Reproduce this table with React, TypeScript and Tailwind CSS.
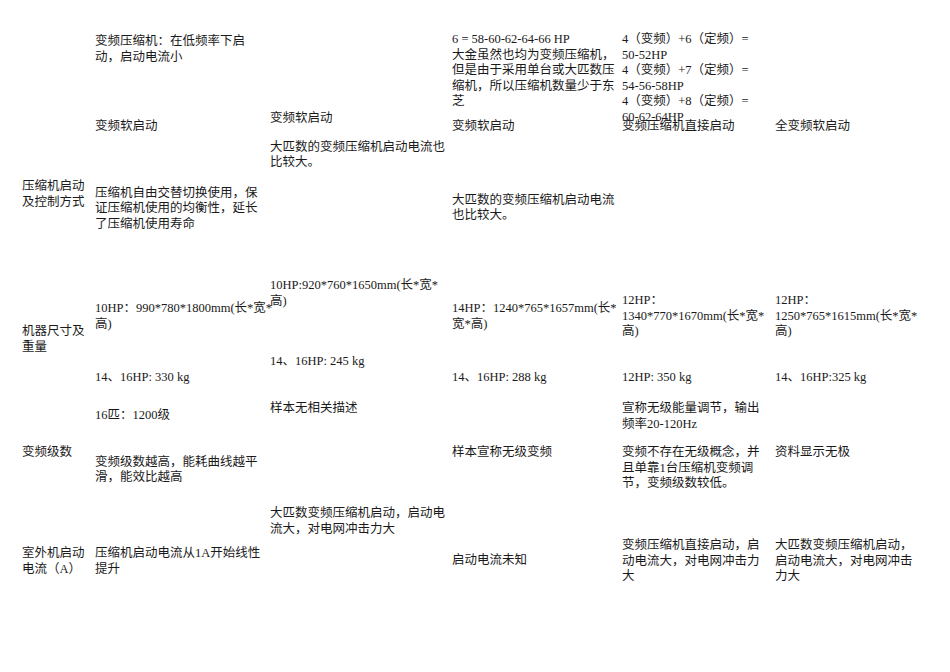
import type { ReactNode } from "react";

function Lines({ lines, className = "" }: { lines: string[]; className?: string }) {
  return (
    <div className={className}>
      {lines.map((line, i) => (
        <div key={i} className="whitespace-nowrap">
          {line}
        </div>
      ))}
    </div>
  );
}

function Cell({ children, className = "" }: { children?: ReactNode; className?: string }) {
  return <div className={`flex flex-col ${className}`}>{children}</div>;
}

export default function App() {
  return (
    <div className="h-[672px] w-[950px] overflow-hidden bg-white pt-[2px] font-['Liberation_Serif','Noto_Sans_CJK_SC',serif] text-[12.5px] leading-[15.6px] text-[#1a1a1a]">
      <div className="grid grid-cols-[95px_175px_182px_170px_153px_1fr] grid-rows-[108px_160px_124px_106px_102px]">
        {/* carried over from previous row */}
        <Cell />
        <Cell className="pt-[32px]">
          <Lines lines={["变频压缩机：在低频率下启", "动，启动电流小"]} />
        </Cell>
        <Cell />
        <Cell className="pt-[30px]">
          <Lines
            lines={[
              "6 = 58-60-62-64-66 HP",
              "大金虽然也均为变频压缩机，",
              "但是由于采用单台或大匹数压",
              "缩机，所以压缩机数量少于东",
              "芝",
            ]}
          />
        </Cell>
        <Cell className="pt-[30px]">
          <Lines
            lines={[
              "4（变频）+6（定频）=",
              "50-52HP",
              "4（变频）+7（定频）=",
              "54-56-58HP",
              "4（变频）+8（定频）=",
              "60-62-64HP",
            ]}
          />
        </Cell>
        <Cell />

        {/* 压缩机启动及控制方式 */}
        <Cell className="pl-[22px] pt-[69px]">
          <Lines lines={["压缩机启动", "及控制方式"]} />
        </Cell>
        <Cell className="pt-[9px]">
          <Lines lines={["变频软启动"]} />
          <Lines
            className="mt-[51px]"
            lines={["压缩机自由交替切换使用，保", "证压缩机使用的均衡性，延长", "了压缩机使用寿命"]}
          />
        </Cell>
        <Cell className="pt-[1px]">
          <Lines lines={["变频软启动"]} />
          <Lines className="mt-[13px]" lines={["大匹数的变频压缩机启动电流也", "比较大。"]} />
        </Cell>
        <Cell className="pt-[9px]">
          <Lines lines={["变频软启动"]} />
          <Lines className="mt-[58px]" lines={["大匹数的变频压缩机启动电流", "也比较大。"]} />
        </Cell>
        <Cell className="pt-[9px]">
          <Lines lines={["变频压缩机直接启动"]} />
        </Cell>
        <Cell className="pt-[9px]">
          <Lines lines={["全变频软启动"]} />
        </Cell>

        {/* 机器尺寸及重量 */}
        <Cell className="pl-[22px] pt-[54px]">
          <Lines lines={["机器尺寸及", "重量"]} />
        </Cell>
        <Cell className="pt-[31px]">
          <Lines lines={["10HP：990*780*1800mm(长*宽*", "高)"]} />
          <Lines className="mt-[38px]" lines={["14、16HP: 330 kg"]} />
        </Cell>
        <Cell className="pt-[8px]">
          <Lines lines={["10HP:920*760*1650mm(长*宽*", "高)"]} />
          <Lines className="mt-[45px]" lines={["14、16HP: 245 kg"]} />
        </Cell>
        <Cell className="pt-[31px]">
          <Lines lines={["14HP：1240*765*1657mm(长*", "宽*高)"]} />
          <Lines className="mt-[38px]" lines={["14、16HP: 288 kg"]} />
        </Cell>
        <Cell className="pt-[23px]">
          <Lines lines={["12HP：", "1340*770*1670mm(长*宽*", "高)"]} />
          <Lines className="mt-[30px]" lines={["12HP: 350 kg"]} />
        </Cell>
        <Cell className="pt-[23px]">
          <Lines lines={["12HP：", "1250*765*1615mm(长*宽*", "高)"]} />
          <Lines className="mt-[30px]" lines={["14、16HP:325 kg"]} />
        </Cell>

        {/* 变频级数 */}
        <Cell className="pl-[22px] pt-[51px]">
          <Lines lines={["变频级数"]} />
        </Cell>
        <Cell className="pt-[14px]">
          <Lines lines={["16匹：1200级"]} />
          <Lines className="mt-[31px]" lines={["变频级数越高，能耗曲线越平", "滑，能效比越高"]} />
        </Cell>
        <Cell className="pt-[7px]">
          <Lines lines={["样本无相关描述"]} />
        </Cell>
        <Cell className="pt-[51px]">
          <Lines lines={["样本宣称无级变频"]} />
        </Cell>
        <Cell className="pt-[7px]">
          <Lines lines={["宣称无级能量调节，输出", "频率20-120Hz"]} />
          <Lines
            className="mt-[13px]"
            lines={["变频不存在无级概念，并", "且单靠1台压缩机变频调", "节，变频级数较低。"]}
          />
        </Cell>
        <Cell className="pt-[51px]">
          <Lines lines={["资料显示无极"]} />
        </Cell>

        {/* 室外机启动电流 */}
        <Cell className="pl-[22px] pt-[46px]">
          <Lines lines={["室外机启动", "电流（A）"]} />
        </Cell>
        <Cell className="pt-[46px]">
          <Lines lines={["压缩机启动电流从1A开始线性", "提升"]} />
        </Cell>
        <Cell className="pt-[6px]">
          <Lines lines={["大匹数变频压缩机启动，启动电", "流大，对电网冲击力大"]} />
        </Cell>
        <Cell className="pt-[53px]">
          <Lines lines={["启动电流未知"]} />
        </Cell>
        <Cell className="pt-[38px]">
          <Lines lines={["变频压缩机直接启动，启", "动电流大，对电网冲击力", "大"]} />
        </Cell>
        <Cell className="pt-[38px]">
          <Lines lines={["大匹数变频压缩机启动，", "启动电流大，对电网冲击", "力大"]} />
        </Cell>
      </div>
    </div>
  );
}
